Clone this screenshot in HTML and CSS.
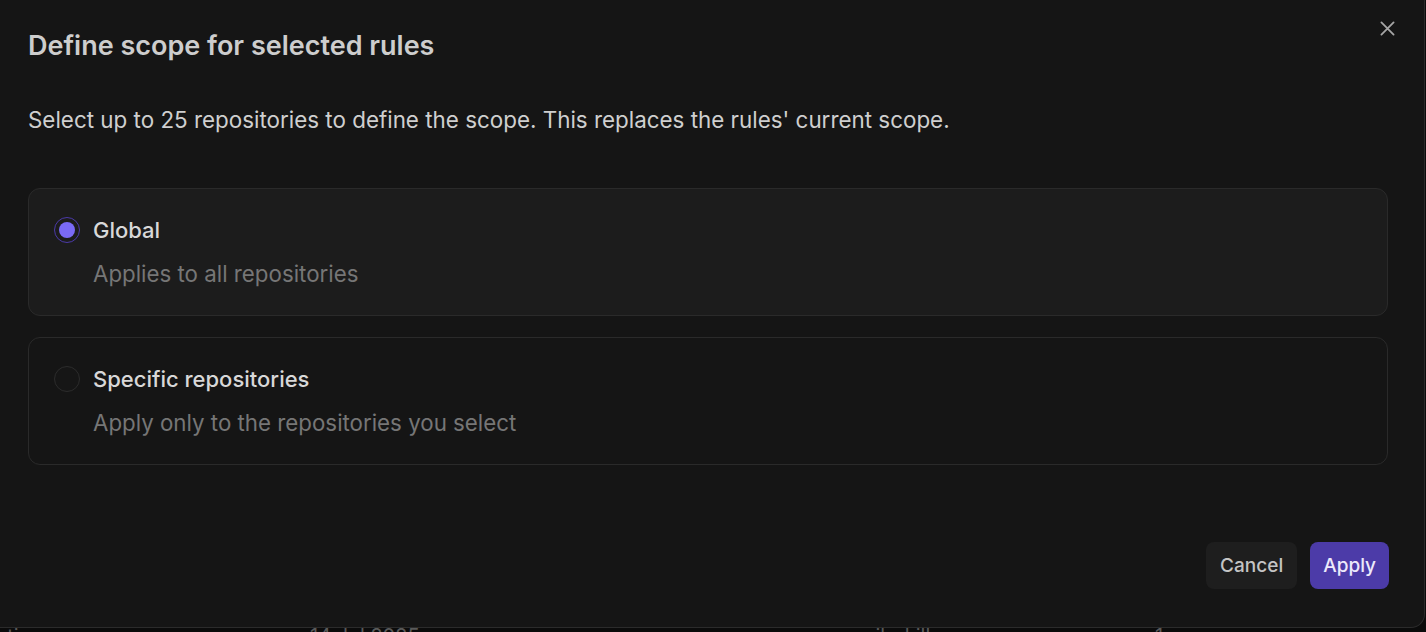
FILE: index.html
```html
<!DOCTYPE html>
<html>
<head>
    <title>Define scope</title>
    <meta charset="utf-8" />
    <link rel="stylesheet" href="styles.css">
</head>
<body>

    <div class="dialog">
        <div class="dialog_head">
            <h2 class="dialog_title">Define scope for selected rules</h2>
            <button class="btn_close" aria-label="Close">
                <svg width="15" height="15" viewBox="0 0 16 16" fill="none" stroke="currentColor" stroke-width="1.9" stroke-linecap="round">
                    <path d="M1.5 1.5 14.5 14.5M14.5 1.5 1.5 14.5" />
                </svg>
            </button>
        </div>

        <p class="dialog_text">Select up to 25 repositories to define the scope. This replaces the rules' current scope.</p>

        <div class="options">
            <label class="option option_on">
                <span class="radio radio_on"><span class="radio_dot"></span></span>
                <span class="option_body">
                    <span class="option_name">Global</span>
                    <span class="option_desc">Applies to all repositories</span>
                </span>
            </label>
            <label class="option">
                <span class="radio"></span>
                <span class="option_body">
                    <span class="option_name">Specific repositories</span>
                    <span class="option_desc">Apply only to the repositories you select</span>
                </span>
            </label>
        </div>

        <div class="dialog_foot">
            <button class="btn btn_cancel">Cancel</button>
            <button class="btn btn_apply">Apply</button>
        </div>
    </div>

    <div class="behind">
        <span class="behind_a">ation</span>
        <span class="behind_b">14 Jul 2025</span>
        <span class="behind_c">email_skills</span>
        <span class="behind_d">1 repo</span>
    </div>

</body>
</html>
```

FILE: styles.css
```css
html, body {
    margin: 0;
    padding: 0;
    height: 632px;
    overflow: hidden;
}

body {
    background: #0b0b0b;
    font-family: Inter, "Noto Sans", sans-serif;
    color: #d2d2d2;
}

.dialog {
    box-sizing: border-box;
    width: 1425px;
    height: 628px;
    background: #151515;
    border-right: 1px solid #2b2b2b;
    border-bottom: 1px solid #2b2b2b;
    border-bottom-right-radius: 14px;
    padding: 24px 36px 0 28px;
    display: flex;
    flex-direction: column;
}

.dialog_head {
    display: flex;
    justify-content: space-between;
    align-items: flex-start;
}

.dialog_title {
    margin: 4px 0 0 0;
    font-size: 27px;
    line-height: 36px;
    font-weight: 600;
    color: #cdcdcd;
}

.btn_close {
    margin: -8px -11px 0 0;
    width: 24px;
    height: 24px;
    padding: 0;
    border: 0;
    background: none;
    color: #a6a6a6;
    display: flex;
    align-items: center;
    justify-content: center;
}

.dialog_text {
    margin: 41px 0 0 0;
    font-size: 22.4px;
    line-height: 30px;
    color: #cfcfcf;
}

.options {
    margin-top: 53px;
    display: flex;
    flex-direction: column;
    gap: 21px;
}

.option {
    display: flex;
    gap: 13px;
    padding: 26px 24px 26px 25px;
    border: 1px solid #2a2a2a;
    border-radius: 12px;
    background: #151515;
}

.option_on {
    background: #1c1c1c;
}

.radio {
    box-sizing: border-box;
    flex: none;
    width: 26px;
    height: 26px;
    margin-top: 2px;
    border: 1px solid #2c2c2c;
    border-radius: 50%;
    background: #161616;
    display: flex;
    align-items: center;
    justify-content: center;
}

.radio_on {
    border-color: #4b3aa8;
    background: #1c1c1c;
}

.radio_dot {
    width: 16px;
    height: 16px;
    border-radius: 50%;
    background: #7a6af6;
}

.option_body {
    display: flex;
    flex-direction: column;
    gap: 14px;
}

.option_name {
    font-size: 22px;
    line-height: 30px;
    font-weight: 500;
    color: #d8d8d8;
}

.option_desc {
    font-size: 22.3px;
    line-height: 30px;
    color: #767676;
}

.dialog_foot {
    margin: auto -1px 38px 0;
    display: flex;
    justify-content: flex-end;
    gap: 13px;
}

.btn {
    height: 47px;
    padding: 0 14px;
    border: 0;
    border-radius: 8px;
    font-family: Inter, "Noto Sans", sans-serif;
    font-size: 19px;
    font-weight: 500;
}

.btn_cancel {
    background: #1e1e1e;
    color: #c4c4c4;
}

.btn_apply {
    padding: 0 13px;
    background: #4c3ba8;
    color: #ece9fb;
}

.behind {
    height: 20px;
    font-size: 20px;
    line-height: 16px;
    color: #5a5a5a;
    position: relative;
}

.behind span {
    position: absolute;
    top: 0;
}

.behind_a { left: -4px; }
.behind_b { left: 310px; }
.behind_c { left: 835px; }
.behind_d { left: 1155px; }
```
